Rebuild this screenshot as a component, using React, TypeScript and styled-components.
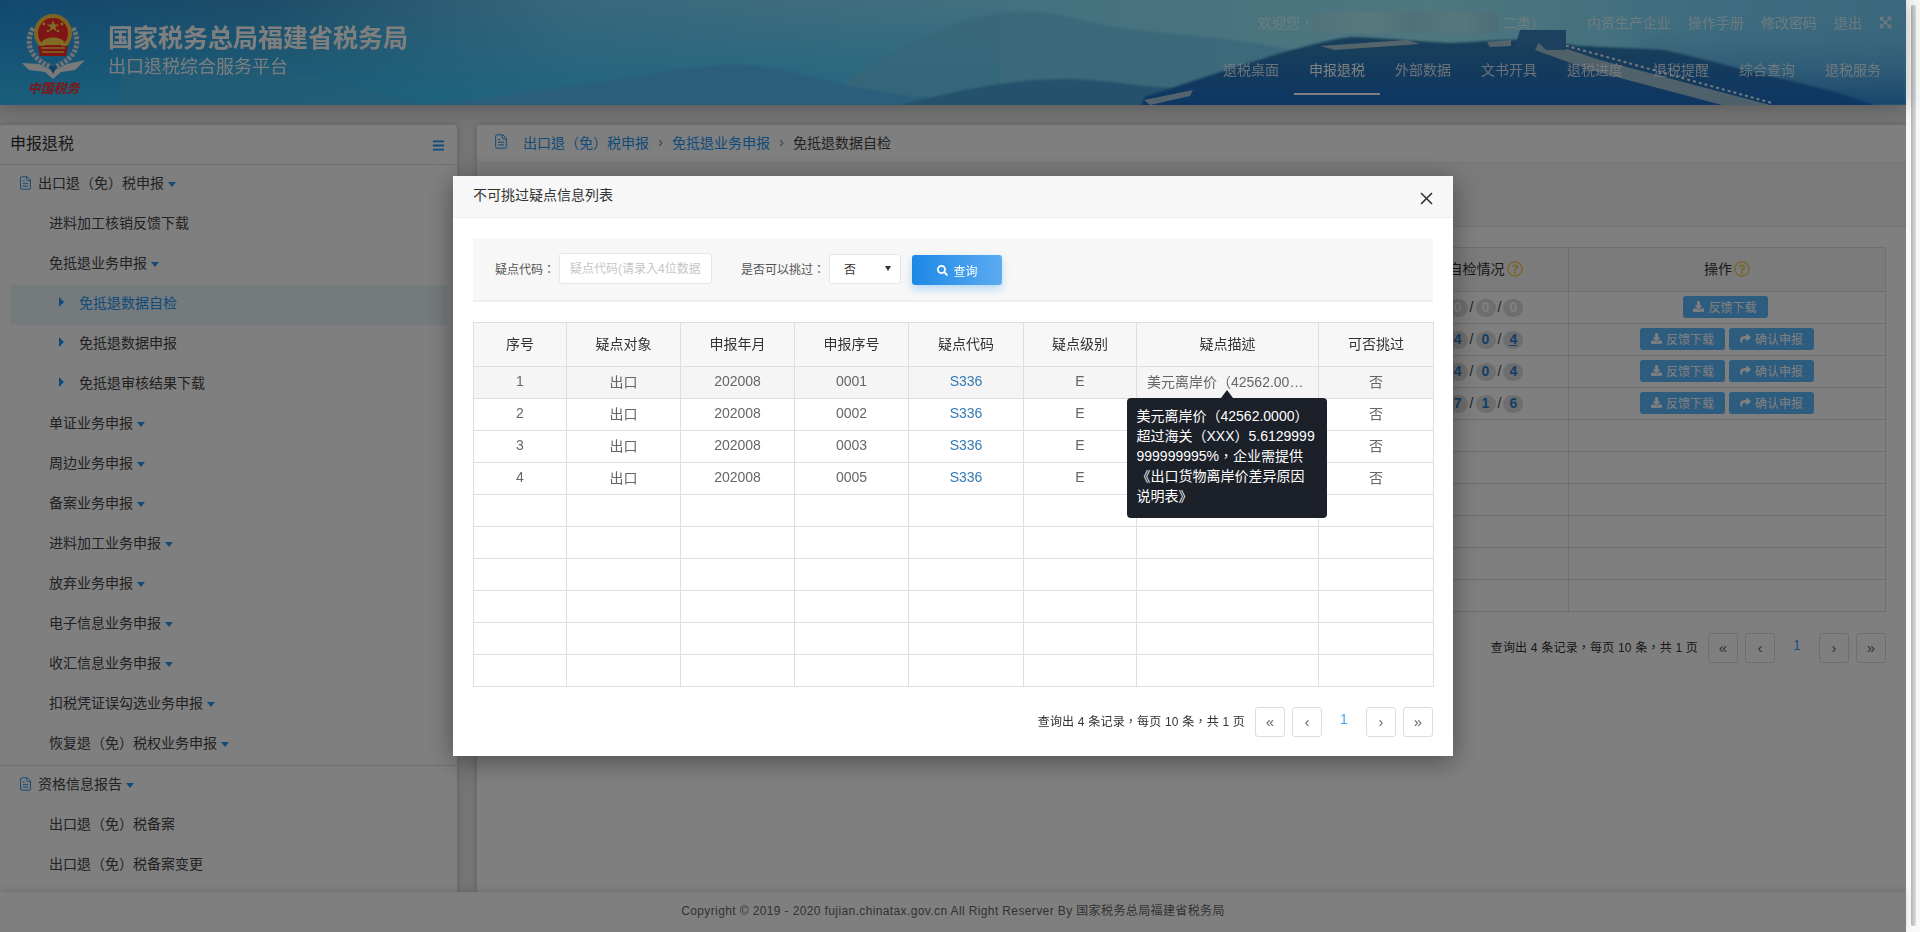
import styled, { createGlobalStyle } from 'styled-components';
import { FileText } from 'lucide-react';
import { FaBars, FaDownload, FaExpandArrowsAlt, FaRegQuestionCircle, FaSearch, FaShare } from 'react-icons/fa';

const GlobalStyle = createGlobalStyle`
  html, body {
    margin: 0;
    padding: 0;
    height: 932px;
    overflow: hidden;
    font-family: "Liberation Sans", "Noto Sans CJK TC", sans-serif;
    font-size: 14px;
    color: #444;
  }
  * { box-sizing: border-box; }
`;

const Page = styled.div`
  display: flex;
  width: 1920px;
  height: 932px;
  overflow: hidden;
`;

const Viewport = styled.div`
  position: relative;
  flex: 1;
  min-width: 0;
  display: flex;
  flex-direction: column;
  background: #eaeaea;
`;

const Scrollbar = styled.div`
  flex: 0 0 14px;
  padding: 5px 4px 6px 5px;
  background: #f8f8f8;
`;

const ScrollThumb = styled.div`
  height: 100%;
  border-radius: 2px;
  background: linear-gradient(90deg, #b4b4b4, #dcdcdc);
`;

/* header */
const Header = styled.header`
  position: relative;
  flex: 0 0 105px;
  display: flex;
  justify-content: space-between;
  overflow: hidden;
  box-shadow: 0 2px 18px rgba(0, 0, 0, 0.25);
  z-index: 1;
`;

const Scene = styled.svg`
  position: absolute;
  inset: 0;
  width: 100%;
  height: 100%;
`;

const Brand = styled.div`
  position: relative;
  display: flex;
  padding-left: 21px;
`;

const LogoWrap = styled.div`
  width: 65px;
  padding-top: 14px;
  display: flex;
  flex-direction: column;
  align-items: center;
`;

const LogoScript = styled.span`
  font-family: "Noto Sans CJK SC", sans-serif;
  font-size: 13px;
  line-height: 15px;
  font-weight: 700;
  font-style: italic;
  color: #ff2a2a;
`;

const Titles = styled.div`
  padding: 22px 0 0 22px;
  color: #fff;
`;

const MainTitle = styled.div`
  font-size: 25px;
  line-height: 32px;
  font-weight: 700;
  white-space: nowrap;
`;

const SubTitle = styled.div`
  font-size: 18px;
  line-height: 26px;
  opacity: 0.95;
`;

const HeaderRight = styled.div`
  position: relative;
  display: flex;
  flex-direction: column;
  align-items: flex-end;
  padding: 12px 10px 0 0;
`;

const TopLinks = styled.div`
  display: flex;
  align-items: center;
  height: 20px;
  padding-right: 4px;
  color: rgba(255, 255, 255, 0.72);
  font-size: 14px;
  gap: 17px;
`;

const Welcome = styled.div`
  display: flex;
  align-items: center;
  margin-right: 25px;
`;

const Masked = styled.span`
  display: block;
  width: 184px;
  height: 21px;
  margin-right: 5px;
  background: linear-gradient(90deg, #a4e6f6 0%, #b4f2fc 30%, #a0e2f4 55%, #b0eefa 78%, #9cdcf0 100%);
`;

const Nav = styled.nav`
  display: flex;
  margin-top: 15px;
`;

const NavItem = styled.a<{ $active?: boolean }>`
  width: 86px;
  height: 48px;
  line-height: 46px;
  text-align: center;
  font-size: 14px;
  color: rgba(255, 255, 255, ${(p) => (p.$active ? 1 : 0.8)});
  border-bottom: 2px solid ${(p) => (p.$active ? '#fff' : 'transparent')};
`;

/* page body */
const Body = styled.div`
  flex: 1;
  min-height: 0;
  display: flex;
  gap: 20px;
  padding-top: 20px;
  overflow: hidden;
`;

const Sidebar = styled.aside`
  flex: 0 0 457px;
  background: #fff;
  box-shadow: 0 0 6px rgba(0, 0, 0, 0.18);
  border-radius: 3px 3px 0 0;
  overflow: hidden;
`;

const SideTitle = styled.div`
  display: flex;
  align-items: center;
  justify-content: space-between;
  height: 40px;
  padding: 0 12px 6px 10px;
  font-size: 16px;
  color: #333;
  border-bottom: 1px solid #e2e2e2;
`;

const SideToggle = styled(FaBars)`
  color: #2196f3;
  font-size: 13px;
  margin-top: 7px;
`;

const SideGroup = styled.div<{ $divided?: boolean }>`
  padding: 0 10px;
  border-top: ${(p) => (p.$divided ? '1px solid #e2e2e2' : 'none')};
`;

const SideRow = styled.div<{ $indent: number; $active?: boolean }>`
  display: flex;
  align-items: center;
  height: 40px;
  padding: 0 0 6px ${(p) => p.$indent}px;
  color: ${(p) => (p.$active ? '#2196f3' : '#444')};
  background: ${(p) => (p.$active ? '#eaf4fb' : 'transparent')};
`;

const GroupIcon = styled(FileText)`
  width: 15px;
  height: 16px;
  margin: 2px 5px 0 0;
  stroke-width: 1.5;
  color: #2196f3;
`;

const Caret = styled.i`
  display: inline-block;
  margin: 5px 0 0 4px;
  border-style: solid;
  border-width: 5px 4px 0;
  border-color: #2196f3 transparent transparent;
`;

const Arrow = styled.i`
  display: inline-block;
  margin-right: 15px;
  border-style: solid;
  border-width: 5px 0 5px 5px;
  border-color: transparent transparent transparent #2196f3;
`;

const Content = styled.main`
  flex: 1;
  min-width: 0;
  background: #fff;
  box-shadow: 0 0 6px rgba(0, 0, 0, 0.18);
  border-radius: 3px 3px 0 0;
`;

const Breadcrumb = styled.div`
  display: flex;
  align-items: center;
  height: 37px;
  padding: 0 0 4px 16px;
  color: #444;
  background: #fff;
`;

const CrumbIcon = styled(FileText)`
  width: 16px;
  height: 17px;
  margin-right: 14px;
  stroke-width: 1.5;
  color: #2196f3;
`;

const CrumbLink = styled.a`
  color: #2196f3;
`;

const CrumbSep = styled.span`
  width: 23px;
  text-align: center;
  color: #777;
`;

const QueryBand = styled.div`
  height: 65px;
  background: #f5f5f5;
  border-top: 1px solid #eaeaea;
  border-bottom: 1px solid #e2e2e2;
`;

const ContentBody = styled.div`
  padding: 20px 20px 0;
`;

const Table = styled.table`
  width: 100%;
  table-layout: fixed;
  border-collapse: collapse;
  font-size: 14px;
  text-align: center;
`;

const Th = styled.th`
  height: 44px;
  padding: 0 0 4px;
  font-weight: 400;
  color: #333;
  background: #f7f7f7;
  border: 1px solid #dedede;
`;

const Td = styled.td`
  position: relative;
  height: 32px;
  padding: 0 10px;
  color: #666;
  border: 1px solid #dedede;
`;

const TextTd = styled(Td)`
  padding-bottom: 4px;
`;

const Tr = styled.tr<{ $hover?: boolean }>`
  background: ${(p) => (p.$hover ? '#f5f5f5' : 'transparent')};
`;

const Col = styled.col<{ $w?: number }>`
  width: ${(p) => (p.$w ? `${p.$w}px` : 'auto')};
`;

const HelpIcon = styled(FaRegQuestionCircle)`
  margin-left: 2px;
  font-size: 16px;
  vertical-align: -3px;
  color: #f2cf63;
`;

const Pill = styled.span<{ $zero?: boolean; $under?: boolean }>`
  display: inline-block;
  min-width: 20px;
  height: 18px;
  line-height: 17px;
  border-radius: 9px;
  font-weight: 700;
  background: #dcdcdc;
  color: ${(p) => (p.$zero ? '#fff' : '#2a7fd0')};
  text-decoration: ${(p) => (p.$under ? 'underline' : 'none')};
`;

const Slash = styled.span`
  margin: 0 2px;
  color: #444;
`;

const ActionBtn = styled.a`
  display: inline-flex;
  align-items: center;
  justify-content: center;
  gap: 4px;
  width: 85px;
  height: 22px;
  margin: 0 2px 2px;
  vertical-align: middle;
  border-radius: 3px;
  font-size: 12px;
  color: #fff;
  background: #5ab8ff;
  &:only-child { margin-right: 6px; }
`;

const Pagination = styled.div`
  display: flex;
  align-items: center;
  justify-content: flex-end;
  gap: 7px;
  color: #333;
  font-size: 12px;
`;

const ContentPagination = styled(Pagination)`
  margin-top: 21px;
`;

const PageInfo = styled.span`
  margin-right: 3px;
  padding-bottom: 4px;
  letter-spacing: 0.2px;
`;

const PageBtn = styled.a`
  width: 30px;
  height: 30px;
  line-height: 28px;
  text-align: center;
  font-size: 15px;
  color: #666;
  background: #fff;
  border: 1px solid #ddd;
  border-radius: 3px;
`;

const PageCurrent = styled.span`
  width: 30px;
  height: 30px;
  line-height: 24px;
  text-align: center;
  font-size: 14px;
  color: #42a5f5;
`;

const Footer = styled.footer`
  position: relative;
  flex: 0 0 40px;
  line-height: 38px;
  text-align: center;
  font-size: 12px;
  letter-spacing: 0.38px;
  color: #666;
  background: #fff;
  box-shadow: 0 -2px 6px rgba(0, 0, 0, 0.12);
`;

/* dialog */
const Backdrop = styled.div`
  position: absolute;
  inset: 0;
  z-index: 10;
  display: flex;
  justify-content: center;
  align-items: flex-start;
  padding-top: 176px;
  background: rgba(0, 0, 0, 0.5);
`;

const Modal = styled.div`
  width: 1000px;
  height: 580px;
  background: #fff;
  box-shadow: 0 5px 25px rgba(0, 0, 0, 0.4);
`;

const ModalHead = styled.div`
  display: flex;
  align-items: center;
  justify-content: space-between;
  height: 42px;
  padding: 0 20px;
  color: #333;
  background: #f7f7f7;
  border-bottom: 1px solid #ececec;
`;

const ModalTitle = styled.span`
  font-size: 14px;
  padding-bottom: 5px;
`;

const CloseBtn = styled.svg`
  width: 13px;
  height: 13px;
  margin: 3px 0 0;
  stroke: #333;
  stroke-width: 1.6;
`;

const ModalBody = styled.div`
  display: flex;
  flex-direction: column;
  gap: 20px;
  padding: 20px;
`;

const FilterBar = styled.div`
  display: flex;
  align-items: center;
  height: 64px;
  padding: 0 0 1px 22px;
  background: #f7f7f7;
  border-bottom: 2px solid #eee;
  font-size: 12px;
  color: #555;
`;

const FilterLabel = styled.label`
  margin-right: 4px;
  white-space: nowrap;
`;

const FilterInput = styled.input`
  width: 153px;
  height: 31px;
  margin: 0 29px 0 0;
  padding: 0 10px;
  font: inherit;
  background: #fff;
  border: 1px solid #e6e6e6;
  border-radius: 3px;
  outline: none;
  &::placeholder { color: #c6c6c6; }
`;

const FilterSelect = styled.div`
  display: flex;
  align-items: center;
  justify-content: space-between;
  width: 72px;
  height: 30px;
  margin: 0 11px 0 0;
  padding: 0 9px 0 14px;
  color: #333;
  background: #fff;
  border: 1px solid #e6e6e6;
  border-radius: 3px;
  &::after {
    content: '';
    border-style: solid;
    border-width: 5px 3px 0;
    border-color: #333 transparent transparent;
  }
`;

const SearchBtn = styled.button`
  display: flex;
  align-items: center;
  justify-content: center;
  gap: 6px;
  width: 90px;
  height: 30px;
  margin-top: 3px;
  padding: 0;
  font: inherit;
  color: #fff;
  background: linear-gradient(90deg, #1c88e6 0%, #5dabf1 100%);
  border: none;
  border-radius: 3px;
  box-shadow: 0 4px 8px rgba(33, 150, 243, 0.3);
`;

const LinkCell = styled.a`
  color: #337ab7;
`;

const Ellipsis = styled.div`
  margin-right: -2px;
  overflow: hidden;
  white-space: nowrap;
  text-overflow: ellipsis;
`;

const Tooltip = styled.div`
  position: absolute;
  top: 100%;
  left: 50%;
  z-index: 2;
  width: 200px;
  margin-left: -101px;
  padding: 8px 10px 12px;
  font-size: 14px;
  line-height: 20px;
  text-align: left;
  white-space: nowrap;
  color: #fff;
  background: #1c2029;
  border-radius: 4px;
  &::before {
    content: '';
    position: absolute;
    top: -8px;
    left: 50%;
    margin-left: -6px;
    border-style: solid;
    border-width: 0 6px 8px;
    border-color: transparent transparent #1c2029;
  }
`;

const Emblem = () => (
  <svg width="65" height="66" viewBox="0 0 65 66">
    <g fill="none" stroke="#e4e4e4" strokeWidth="5" strokeDasharray="3 1.5">
      <path d="M12 14 C4 28 8 44 30 53" />
      <path d="M52 14 C60 28 56 44 34 53" />
    </g>
    <path d="M1 49 L18 50 L32 57 L46 50 L64 46 L54 56 L40 58 L32 65 L24 58 L8 56 Z" fill="#f4f4f4" />
    <path d="M28 52 H36 L32 60 Z" fill="#2a80c8" />
    <circle cx="32" cy="19" r="19" fill="#ffc840" />
    <circle cx="32" cy="19" r="15" fill="#ff2a2a" />
    <path d="M32 6 l1.6 4.4 h4.6 l-3.8 2.8 1.4 4.4 -3.8 -2.7 -3.8 2.7 1.4 -4.4 -3.8 -2.8 h4.6 Z" fill="#ffd84a" />
    <g fill="#ffd84a">
      <circle cx="23" cy="10" r="1.4" />
      <circle cx="41" cy="10" r="1.4" />
      <circle cx="27" cy="17" r="1.2" />
      <circle cx="37" cy="17" r="1.2" />
    </g>
    <path d="M21 28 C23 22 41 22 43 28 L46 31 H18 Z" fill="#ffd84a" />
    <path d="M17 32 H47 L45 42 H19 Z" fill="#ff2a2a" />
    <path d="M20 34 H44 M21 38 H43" stroke="#ffd84a" strokeWidth="1.4" />
  </svg>
);

const HeaderScene = () => (
  <Scene viewBox="0 0 1906 105" preserveAspectRatio="none">
    <defs>
      <linearGradient id="sky" x1="0" x2="1" y1="0" y2="0">
        <stop offset="0" stopColor="#2490e0" />
        <stop offset="0.14" stopColor="#3a9ad0" />
        <stop offset="0.3" stopColor="#70d0f8" />
        <stop offset="0.5" stopColor="#84e0ff" />
        <stop offset="0.75" stopColor="#9cf0ff" />
        <stop offset="0.9" stopColor="#7cd8ff" />
        <stop offset="1" stopColor="#76d0f8" />
      </linearGradient>
      <linearGradient id="haze" x1="0" x2="0" y1="0" y2="1">
        <stop offset="0" stopColor="#36c8ff" stopOpacity="0" />
        <stop offset="1" stopColor="#36c8ff" stopOpacity="0.8" />
      </linearGradient>
      <linearGradient id="ridge" x1="0" x2="0" y1="0.2" y2="1">
        <stop offset="0" stopColor="#2e7cb4" />
        <stop offset="1" stopColor="#1a6cc8" />
      </linearGradient>
      <linearGradient id="farRight" x1="0" x2="0" y1="0.2" y2="1">
        <stop offset="0" stopColor="#70c8f0" stopOpacity="0" />
        <stop offset="1" stopColor="#2c88d8" />
      </linearGradient>
      <filter id="soft">
        <feGaussianBlur stdDeviation="1.1" />
      </filter>
    </defs>
    <rect width="1906" height="105" fill="url(#sky)" />
    <rect width="1000" height="105" fill="url(#haze)" />
    <g filter="url(#soft)">
      <rect x="1640" width="266" height="105" fill="url(#farRight)" />
      <path d="M120 58 C230 54 320 72 430 108 H120 Z" fill="#50b8e8" opacity="0.5" />
      <path d="M800 108 C860 70 920 36 960 22 C1010 6 1045 10 1090 22 C1150 36 1230 34 1300 52 V108 Z" fill="#70ccf2" opacity="0.75" />
      <path d="M395 108 C470 100 520 94 585 84 C635 78 680 67 722 65 C760 62 800 74 850 86 C900 96 935 100 965 96 L1010 108 Z" fill="#56bcf6" />
      <path d="M880 108 C920 102 940 94 975 88 C1030 78 1070 76 1130 84 C1185 92 1250 88 1310 74 V108 Z" fill="#48a4d8" />
      <path d="M1140 108 L1144 97 C1180 85 1210 75 1235 67 C1260 60 1280 52 1300 48 C1320 42 1340 38 1352 37 C1390 38 1420 42 1450 43 C1480 42 1510 38 1541 40 C1570 46 1590 46 1603 47 C1630 48 1650 49 1664 50 C1710 60 1750 72 1787 80 C1830 90 1860 98 1878 108 Z" fill="url(#ridge)" />
    </g>
    <path d="M1320 46 L1407 40 L1420 44 L1335 50 Z M1487 42 L1511 40 V46 L1490 47 Z M1144 100 L1193 90 L1190 96 L1150 105 Z" fill="#c8dce0" opacity="0.8" />
    <path d="M1540 40 L1600 60 L1770 105 H1722 L1590 70 L1535 50 Z" fill="#b4d0d8" opacity="0.85" />
    <path d="M1560 44 L1772 103" stroke="#f0f0f0" strokeWidth="2" strokeDasharray="3 3" fill="none" />
    <path d="M1514 50 L1520 30 H1566 V50 H1546 L1538 42 Z" fill="#3a82bc" />
  </Scene>
);

const navItems = ['退税桌面', '申报退税', '外部数据', '文书开具', '退税进度', '退税提醒', '综合查询', '退税服务'];

const sideGroupOne: { text: string; indent: number; caret?: boolean; arrow?: boolean; active?: boolean }[] = [
  { text: '进料加工核销反馈下载', indent: 39 },
  { text: '免抵退业务申报', indent: 39, caret: true },
  { text: '免抵退数据自检', indent: 49, arrow: true, active: true },
  { text: '免抵退数据申报', indent: 49, arrow: true },
  { text: '免抵退审核结果下载', indent: 49, arrow: true },
  { text: '单证业务申报', indent: 39, caret: true },
  { text: '周边业务申报', indent: 39, caret: true },
  { text: '备案业务申报', indent: 39, caret: true },
  { text: '进料加工业务申报', indent: 39, caret: true },
  { text: '放弃业务申报', indent: 39, caret: true },
  { text: '电子信息业务申报', indent: 39, caret: true },
  { text: '收汇信息业务申报', indent: 39, caret: true },
  { text: '扣税凭证误勾选业务申报', indent: 39, caret: true },
  { text: '恢复退（免）税权业务申报', indent: 39, caret: true },
];

const mainRows = [
  { counts: [0, 0, 0], confirm: false },
  { counts: [4, 0, 4], confirm: true },
  { counts: [4, 0, 4], confirm: true },
  { counts: [7, 1, 6], confirm: true },
];

const modalRows = [
  ['1', '0001'],
  ['2', '0002'],
  ['3', '0003'],
  ['4', '0005'],
];

const modalCols = [93, 114, 114, 114, 115, 113, 182, 115];
const modalHeads = ['序号', '疑点对象', '申报年月', '申报序号', '疑点代码', '疑点级别', '疑点描述', '可否挑过'];

const PageButtons = () => (
  <>
    <PageBtn>«</PageBtn>
    <PageBtn>‹</PageBtn>
    <PageCurrent>1</PageCurrent>
    <PageBtn>›</PageBtn>
    <PageBtn>»</PageBtn>
  </>
);

export default function App() {
  return (
    <Page>
      <GlobalStyle />
      <Viewport>
        <Header>
          <HeaderScene />
          <Brand>
            <LogoWrap>
              <Emblem />
              <LogoScript>中国税务</LogoScript>
            </LogoWrap>
            <Titles>
              <MainTitle>国家税务总局福建省税务局</MainTitle>
              <SubTitle>出口退税综合服务平台</SubTitle>
            </Titles>
          </Brand>
          <HeaderRight>
            <TopLinks>
              <Welcome>
                欢迎您，
                <Masked />
                二类）
              </Welcome>
              <span>内资生产企业</span>
              <span>操作手册</span>
              <span>修改密码</span>
              <span>退出</span>
              <FaExpandArrowsAlt size={13} />
            </TopLinks>
            <Nav>
              {navItems.map((item) => (
                <NavItem key={item} $active={item === '申报退税'}>
                  {item}
                </NavItem>
              ))}
            </Nav>
          </HeaderRight>
        </Header>

        <Body>
          <Sidebar>
            <SideTitle>
              申报退税
              <SideToggle />
            </SideTitle>
            <SideGroup>
              <SideRow $indent={8}>
                <GroupIcon />
                出口退（免）税申报
                <Caret />
              </SideRow>
              {sideGroupOne.map((row) => (
                <SideRow key={row.text} $indent={row.indent} $active={row.active}>
                  {row.arrow && <Arrow />}
                  {row.text}
                  {row.caret && <Caret />}
                </SideRow>
              ))}
            </SideGroup>
            <SideGroup $divided>
              <SideRow $indent={8}>
                <GroupIcon />
                资格信息报告
                <Caret />
              </SideRow>
              <SideRow $indent={39}>出口退（免）税备案</SideRow>
              <SideRow $indent={39}>出口退（免）税备案变更</SideRow>
            </SideGroup>
          </Sidebar>

          <Content>
            <Breadcrumb>
              <CrumbIcon />
              <CrumbLink>出口退（免）税申报</CrumbLink>
              <CrumbSep>›</CrumbSep>
              <CrumbLink>免抵退业务申报</CrumbLink>
              <CrumbSep>›</CrumbSep>
              免抵退数据自检
            </Breadcrumb>
            <QueryBand />
            <ContentBody>
              <Table>
                <colgroup>
                  <Col />
                  <Col $w={166} />
                  <Col $w={317} />
                </colgroup>
                <thead>
                  <tr>
                    <Th />
                    <Th>
                      自检情况
                      <HelpIcon />
                    </Th>
                    <Th>
                      操作
                      <HelpIcon />
                    </Th>
                  </tr>
                </thead>
                <tbody>
                  {Array.from({ length: 10 }, (_, i) => {
                    const row = mainRows[i];
                    return (
                      <tr key={i}>
                        <Td />
                        <Td>
                          {row &&
                            row.counts.map((n, j) => (
                              <span key={j}>
                                {j > 0 && <Slash>/</Slash>}
                                <Pill $zero={n === 0 && i === 0} $under={i === 1 && j === 2}>
                                  {n}
                                </Pill>
                              </span>
                            ))}
                        </Td>
                        <Td>
                          {row && (
                            <>
                              <ActionBtn>
                                <FaDownload size={11} />
                                反馈下载
                              </ActionBtn>
                              {row.confirm && (
                                <ActionBtn>
                                  <FaShare size={11} />
                                  确认申报
                                </ActionBtn>
                              )}
                            </>
                          )}
                        </Td>
                      </tr>
                    );
                  })}
                </tbody>
              </Table>
              <ContentPagination>
                <PageInfo>查询出 4 条记录，每页 10 条，共 1 页</PageInfo>
                <PageButtons />
              </ContentPagination>
            </ContentBody>
          </Content>
        </Body>

        <Footer>Copyright © 2019 - 2020 fujian.chinatax.gov.cn All Right Reserver By 国家税务总局福建省税务局</Footer>

        <Backdrop>
          <Modal>
            <ModalHead>
              <ModalTitle>不可挑过疑点信息列表</ModalTitle>
              <CloseBtn viewBox="0 0 13 13">
                <path d="M1 1 L12 12 M12 1 L1 12" />
              </CloseBtn>
            </ModalHead>
            <ModalBody>
              <FilterBar>
                <FilterLabel>疑点代码：</FilterLabel>
                <FilterInput placeholder="疑点代码(请录入4位数据)" />
                <FilterLabel>是否可以挑过：</FilterLabel>
                <FilterSelect>否</FilterSelect>
                <SearchBtn>
                  <FaSearch size={11} />
                  查询
                </SearchBtn>
              </FilterBar>
              <Table>
                <colgroup>
                  {modalCols.map((w, i) => (
                    <Col key={i} $w={w} />
                  ))}
                </colgroup>
                <thead>
                  <tr>
                    {modalHeads.map((h) => (
                      <Th key={h}>{h}</Th>
                    ))}
                  </tr>
                </thead>
                <tbody>
                  {Array.from({ length: 10 }, (_, i) => {
                    const row = modalRows[i];
                    if (!row) {
                      return (
                        <tr key={i}>
                          {modalCols.map((_w, j) => (
                            <Td key={j} />
                          ))}
                        </tr>
                      );
                    }
                    return (
                      <Tr key={i} $hover={i === 0}>
                        <TextTd>{row[0]}</TextTd>
                        <TextTd>出口</TextTd>
                        <TextTd>202008</TextTd>
                        <TextTd>{row[1]}</TextTd>
                        <TextTd>
                          <LinkCell>S336</LinkCell>
                        </TextTd>
                        <TextTd>E</TextTd>
                        <TextTd>
                          {i === 0 && (
                            <>
                              <Ellipsis>美元离岸价（42562.0000）超过海关（XXX）5.6129999999999995%，企业需提供</Ellipsis>
                              <Tooltip>
                                美元离岸价（42562.0000）
                                <br />
                                超过海关（XXX）5.6129999
                                <br />
                                999999995%，企业需提供
                                <br />
                                《出口货物离岸价差异原因
                                <br />
                                说明表》
                              </Tooltip>
                            </>
                          )}
                        </TextTd>
                        <TextTd>否</TextTd>
                      </Tr>
                    );
                  })}
                </tbody>
              </Table>
              <Pagination>
                <PageInfo>查询出 4 条记录，每页 10 条，共 1 页</PageInfo>
                <PageButtons />
              </Pagination>
            </ModalBody>
          </Modal>
        </Backdrop>
      </Viewport>
      <Scrollbar>
        <ScrollThumb />
      </Scrollbar>
    </Page>
  );
}
